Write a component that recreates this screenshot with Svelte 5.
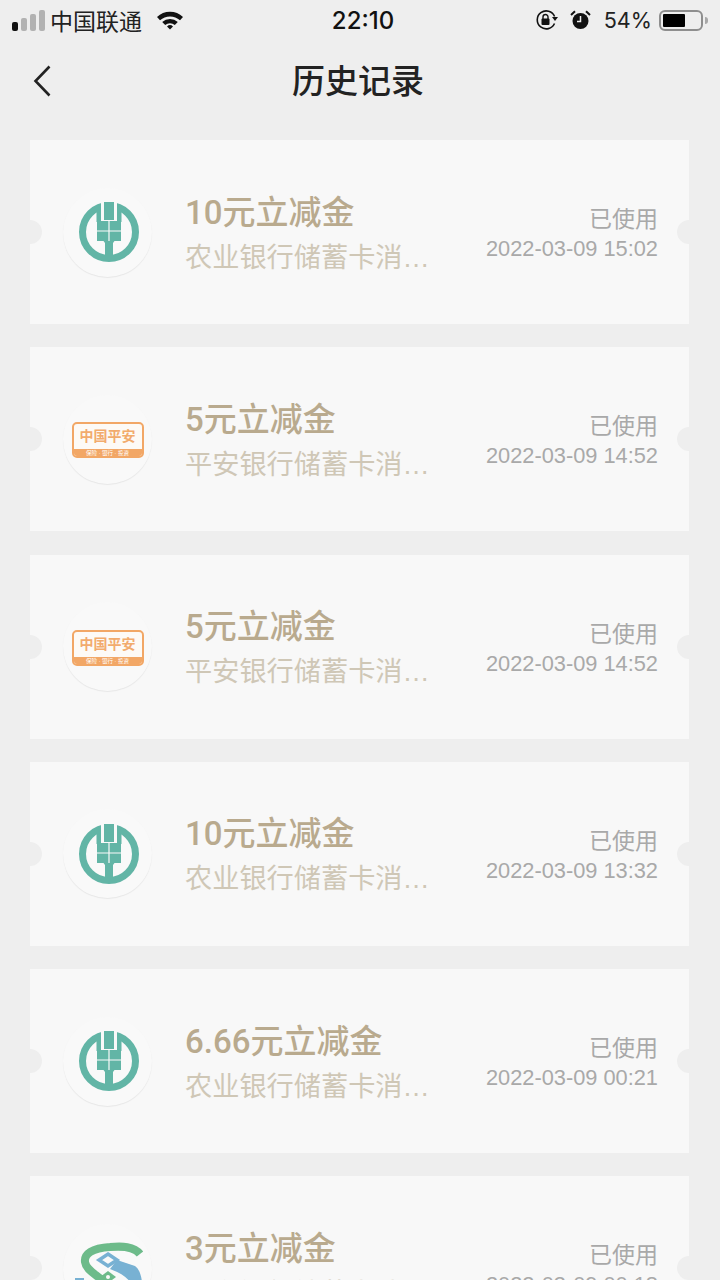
<script>
  const records = [
    { bank: 'abc', title: '10元立减金', desc: '农业银行储蓄卡消…', time: '2022-03-09 15:02' },
    { bank: 'pingan', title: '5元立减金', desc: '平安银行储蓄卡消…', time: '2022-03-09 14:52' },
    { bank: 'pingan', title: '5元立减金', desc: '平安银行储蓄卡消…', time: '2022-03-09 14:52' },
    { bank: 'abc', title: '10元立减金', desc: '农业银行储蓄卡消…', time: '2022-03-09 13:32' },
    { bank: 'abc', title: '6.66元立减金', desc: '农业银行储蓄卡消…', time: '2022-03-09 00:21' },
    { bank: 'sbi', title: '3元立减金', desc: '上海银行储蓄卡消…', time: '2022-03-09 00:18' }
  ];
</script>

<div class="page">
  <div class="status-bar">
    <div class="carrier">
      <span class="signal">
        <i class="on" style="height: 9px"></i>
        <i style="height: 13px"></i>
        <i style="height: 17px"></i>
        <i style="height: 21px"></i>
      </span>
      <span class="carrier-name">中国联通</span>
      <svg class="wifi" width="28" height="20" viewBox="0 0 28 20">
        <path d="M1 7 A19 19 0 0 1 27 7 L24 10.2 A15 15 0 0 0 4 10.2 Z" fill="#111" />
        <path d="M6.2 12 A11.5 11.5 0 0 1 21.8 12 L18.8 15 A7.5 7.5 0 0 0 9.2 15 Z" fill="#111" />
        <path d="M11 16.4 A4.4 4.4 0 0 1 17 16.4 L14 19.6 Z" fill="#111" />
      </svg>
    </div>
    <div class="clock">22:10</div>
    <div class="indicators">
      <svg width="24" height="22" viewBox="0 0 24 22">
        <path d="M19.5 14.5 A9 9 0 1 1 19.6 7.5" fill="none" stroke="#111" stroke-width="1.6" />
        <path d="M17 8 L23 8 L20 12 Z" fill="#111" />
        <rect x="6.5" y="9.5" width="8" height="6.5" rx="1" fill="#111" />
        <path d="M8 10 V8 A2.5 2.5 0 0 1 13 8 V10" fill="none" stroke="#111" stroke-width="1.4" />
      </svg>
      <svg class="alarm" width="21" height="20" viewBox="0 0 21 20">
        <circle cx="10.5" cy="11" r="8" fill="#111" />
        <path d="M10.5 6 V11.5 H7" fill="none" stroke="#eee" stroke-width="1.5" />
        <path d="M1 5 L5 1.2 M20 5 L16 1.2" stroke="#111" stroke-width="2" />
      </svg>
      <span class="percent">54%</span>
      <span class="battery"><i></i></span>
      <span class="battery-tip"></span>
    </div>
  </div>

  <header class="nav">
    <svg class="back" width="18" height="32" viewBox="0 0 18 32">
      <path d="M16.5 1.5 L2.5 16 L16.5 30.5" fill="none" stroke="#222" stroke-width="2.6" />
    </svg>
    <h1>历史记录</h1>
  </header>

  <div class="list">
    {#each records as r}
      <div class="card">
        <span class="notch left"></span>
        <span class="notch right"></span>
        <div class="logo">
          {#if r.bank === 'abc'}
            <svg width="62" height="62" viewBox="-1 0 62 62">
              <circle cx="31" cy="31" r="26.5" fill="none" stroke="#62b5a6" stroke-width="7" />
              <rect x="23" y="0" width="16" height="20" fill="#f9f9f9" />
              <rect x="18.5" y="7" width="4.5" height="14" fill="#62b5a6" />
              <rect x="39" y="7" width="4.5" height="14" fill="#62b5a6" />
              <rect x="26" y="1" width="10" height="18" fill="#62b5a6" />
              <rect x="19" y="20" width="24" height="20" fill="#62b5a6" />
              <path d="M25.5 40 H36.5 L35 42 V56 H27 V42 Z" fill="#62b5a6" />
              <path d="M19 30 H43 M31 20 V40" stroke="#f9f9f9" stroke-width="1.2" />
            </svg>
          {:else if r.bank === 'pingan'}
            <div class="pingan">
              <span class="pingan-name">中国平安</span>
              <span class="pingan-sub">保险 · 银行 · 投资</span>
            </div>
          {:else}
            <svg width="88" height="88" viewBox="0 0 88 88">
              <path d="M76 30 C70 22 58 22 46 23 C28 24 20 30 21 38 C22 46 32 50 40 58" fill="none" stroke="#6dbb8a" stroke-width="8" />
              <path d="M53 36 L71 42 C75 45 77 50 78 58 L66 58 C62 52 54 48 46 45 Z" fill="#78b1d3" />
              <path d="M44 30 L53 36 L44 42 L35 36 Z" fill="#f9f9f9" stroke="#78b1d3" stroke-width="3.5" />
              <path d="M44 47 L52 53 L44 59 L36 53 Z" fill="#6dbb8a" />
              <circle cx="44" cy="53" r="2" fill="#f9f9f9" />
              <rect x="11" y="54" width="9" height="4" fill="#78b1d3" />
            </svg>
          {/if}
        </div>
        <div class="info">
          <div class="title">{r.title}</div>
          <div class="desc">{r.desc}</div>
        </div>
        <div class="meta">
          <div class="state">已使用</div>
          <div class="time">{r.time}</div>
        </div>
      </div>
    {/each}
  </div>
</div>

<style>
  :global(body) {
    background: #eeeeee;
  }

  .page {
    height: 1280px;
    overflow: hidden;
    background: #eeeeee;
    font-family: "Liberation Sans", "Noto Sans CJK SC", sans-serif;
  }

  .status-bar {
    height: 40px;
    display: grid;
    grid-template-columns: 1fr auto 1fr;
    align-items: center;
    padding: 0 12px;
    color: #111;
  }

  .carrier, .indicators {
    display: flex;
    align-items: center;
  }

  .signal {
    display: flex;
    align-items: flex-end;
    gap: 3px;
    margin-top: 1px;
  }

  .signal i {
    width: 6px;
    border-radius: 2px;
    background: #b2b2b2;
  }

  .signal i.on { background: #111; }

  .carrier-name {
    font-size: 23px;
    margin-left: 5px;
    color: #222;
  }

  .wifi { margin-left: 14px; }

  .clock {
    font-size: 24px;
    font-weight: 500;
    font-family: Inter, sans-serif;
    margin-left: 6px;
  }

  .indicators { justify-content: flex-end; }

  .alarm { margin-left: 11px; }

  .percent {
    font-size: 21.6px;
    font-family: Inter, sans-serif;
    margin-left: 13px;
    color: #222;
  }

  .battery {
    width: 44px;
    height: 21px;
    margin-left: 7px;
    box-sizing: border-box;
    border: 2px solid #8e8e8e;
    border-radius: 6px;
    padding: 2px;
    display: flex;
  }

  .battery i {
    width: 22px;
    background: #000;
    border-radius: 1px;
  }

  .battery-tip {
    width: 3px;
    height: 7px;
    margin-left: 2px;
    border-radius: 0 3px 3px 0;
    background: #a8a8a8;
  }

  .nav {
    height: 80px;
    position: relative;
    display: flex;
    align-items: center;
    justify-content: center;
    padding-right: 4px;
    box-sizing: border-box;
  }

  .nav h1 {
    margin: 0 0 2px;
    font-size: 33px;
    font-weight: 500;
    color: #222;
  }

  .back {
    position: absolute;
    left: 33px;
    top: 25px;
  }

  .list {
    padding: 20px 31px 0 30px;
    display: flex;
    flex-direction: column;
    gap: 23.25px;
  }

  .card {
    position: relative;
    flex: none;
    height: 184px;
    background: #f8f8f8;
    display: flex;
    align-items: center;
    overflow: hidden;
  }

  .notch {
    position: absolute;
    top: 80px;
    width: 24px;
    height: 24px;
    border-radius: 50%;
    background: #eeeeee;
  }

  .notch.left { left: -12px; }
  .notch.right { right: -12px; }

  .logo {
    flex: none;
    width: 89px;
    height: 89px;
    margin-left: 33px;
    border-radius: 50%;
    background: #f9f9f9;
    box-shadow: 0 1px 1px rgba(0, 0, 0, 0.07);
    display: flex;
    align-items: center;
    justify-content: center;
  }

  .logo svg { display: block; }

  .pingan {
    flex: none;
    width: 72px;
    height: 36px;
    margin-top: 2px;
    box-sizing: border-box;
    border: 2px solid #f2a766;
    border-radius: 5px;
    background: #fdfaf6;
    display: flex;
    flex-direction: column;
    overflow: hidden;
  }

  .pingan-name {
    flex: 1;
    font-size: 14px;
    line-height: 25px;
    font-weight: 700;
    text-align: center;
    color: #f2ab6d;
  }

  .pingan-sub {
    height: 9px;
    font-size: 5.5px;
    line-height: 9px;
    text-align: center;
    color: #fff;
    background: #f2a766;
  }

  .info {
    width: 250px;
    margin-left: 33px;
    padding-top: 7px;
  }

  .title {
    font-family: Roboto, "Noto Sans CJK SC", sans-serif;
    font-size: 33px;
    font-weight: 500;
    line-height: 44px;
    color: #b9aa8e;
    white-space: nowrap;
  }

  .desc {
    font-size: 27.2px;
    line-height: 46px;
    color: #cfc7b6;
    white-space: nowrap;
  }

  .meta {
    margin-left: auto;
    margin-right: 31px;
    padding-top: 2px;
    text-align: right;
    color: #a9a9a9;
  }

  .state {
    font-size: 23px;
    line-height: 32px;
  }

  .time {
    font-size: 21.8px;
    line-height: 28px;
    white-space: nowrap;
  }
</style>
